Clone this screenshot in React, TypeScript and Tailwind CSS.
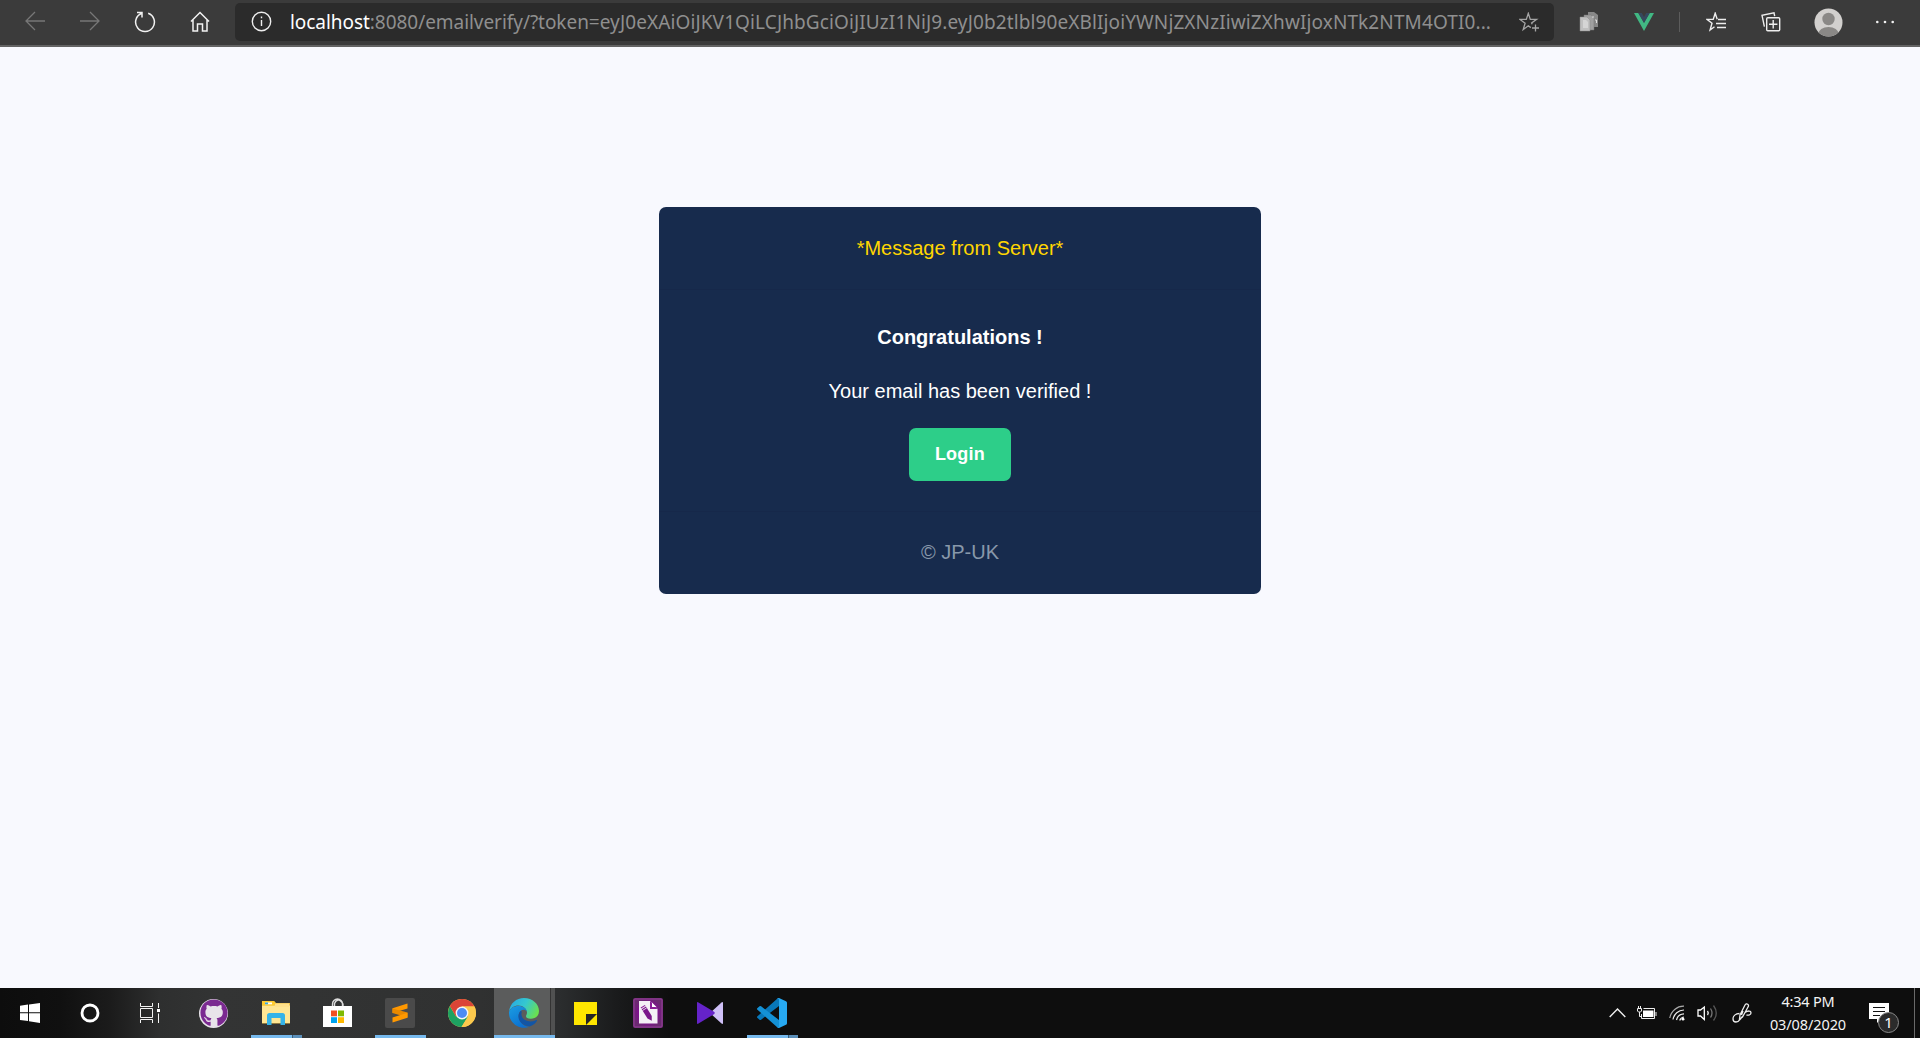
import type { ReactNode } from "react";
import { FaGithub } from "react-icons/fa";

function Slot({ className = "", children }: { className?: string; children?: ReactNode }) {
  return <div className={"relative flex h-full shrink-0 items-center justify-center " + className}>{children}</div>;
}

function BrowserBar() {
  return (
    <header className="flex h-[47px] w-full items-start border-b-2 border-[#636363] bg-[#3b3b3b] pl-[7.5px] font-['Noto_Sans','Open_Sans',sans-serif]">
      <Slot className="w-[55px] pb-[3px]">
        <svg width="20" height="20" viewBox="0 0 20 20" fill="none" stroke="#777" strokeWidth="1.3"><path d="M20 10H1M10 1L1 10l9 9" /></svg>
      </Slot>
      <Slot className="w-[55px] pb-[3px]">
        <svg width="20" height="20" viewBox="0 0 20 20" fill="none" stroke="#777" strokeWidth="1.3"><path d="M0 10h19M10 1l9 9-9 9" /></svg>
      </Slot>
      <Slot className="w-[55px] pb-[2px]">
        <svg width="22" height="22" viewBox="0 0 22 22" fill="none" stroke="#f2f2f2" strokeWidth="1.5"><path d="M14.2 2.3A9.4 9.4 0 1 1 7.3 2.5M3 1.5h5v5" /></svg>
      </Slot>
      <Slot className="w-[55px] pb-[3px]">
        <svg width="20" height="21" viewBox="0 0 20 21" fill="none" stroke="#f2f2f2" strokeWidth="1.5"><path d="M1 10.5L10 1.5l9 9M3 9v11h4.5v-7h5v7H17V9" /></svg>
      </Slot>
      <div className="ml-[7.5px] mt-[3px] flex h-[38px] w-[1319px] shrink-0 items-center rounded-[5px] bg-[#2b2b2b] pl-[16px] pr-[15px]">
        <svg className="mb-px shrink-0" width="21" height="21" viewBox="0 0 21 21" fill="none" stroke="#eee" strokeWidth="1.4"><circle cx="10.5" cy="10.5" r="9.2" /><path d="M10.5 9v6M10.5 5.6v1.7" /></svg>
        <div className="ml-[18px] w-[1204px] shrink-0 whitespace-nowrap text-[19px] leading-[38px] tracking-[0.11px] text-[#8f8f8f]">
          <span className="tracking-[-0.05px]"><span className="text-white">localhost</span>:8080/emailverify/?token=</span>eyJ0eXAiOiJKV1QiLCJhbGciOiJIUzI1NiJ9.eyJ0b2tlbl90eXBlIjoiYWNjZXNzIiwiZXhwIjoxNTk2NTM4OTI0...
        </div>
        <svg className="ml-auto shrink-0" width="20" height="20" viewBox="0 0 20 20" fill="none" stroke="#a5a5a5" strokeWidth="1.3"><path d="M13.2 12.3L12.6 11 17.6 7.4H11.3L9.3 1.3 7.3 7.4H1L6.1 11.2 4.2 17.6 9.3 13.8 11.8 15.6M16.5 12.5v7M13 16h7" /></svg>
      </div>
      <Slot className="ml-[7.5px] w-[55px] pb-px">
        <svg width="20" height="20" viewBox="0 0 20 20"><path d="M9 0h6l4 3v12H9z" fill="#888" /><path d="M5 3h7l3 3v12H5z" fill="#a0a0a0" stroke="#777" strokeWidth=".5" /><path d="M1 5h7l3 3v11H1z" fill="#c0c0c0" stroke="#888" strokeWidth=".5" /><path d="M4 8h3l2 2v6H4z" fill="#d5d5d5" /><path d="M13 5h2M16 8h1.5v3" stroke="#ddd" fill="none" /></svg>
      </Slot>
      <Slot className="w-[55px] pb-[2px]">
        <svg width="20" height="18" viewBox="0 0 20 18"><path d="M0 0h4.5L10 9.7 15.5 0H20L10 18z" fill="#41b883" /><path d="M4.2 0h3.6L10 4l2.2-4h3.6L10 10z" fill="#35495e" /></svg>
      </Slot>
      <div className="ml-[7.5px] mr-[8.5px] mt-[12px] h-[20px] w-px bg-[#5c5c5c]" />
      <Slot className="w-[55px] pb-[2px] pr-px">
        <svg width="20" height="20" viewBox="0 0 20 20" fill="none" stroke="#eee" strokeWidth="1.4"><path d="M11.2 7.3L9.2 1.2 7.2 7.4H.9L6 11.2 4.1 18 8.5 14.7M12 7.5h8M10 11.5h10M11 15.5h9" /></svg>
      </Slot>
      <Slot className="w-[55px] pb-px pr-px">
        <svg width="20" height="20" viewBox="0 0 20 20" fill="none" stroke="#eee" strokeWidth="1.4"><path d="M3.4 14.6L1 3.3 13 .8l.7 3.4" /><rect x="5.7" y="5.7" width="13" height="13" rx="1" /><path d="M12.2 8v8.4M8 12.2h8.4" /></svg>
      </Slot>
      <Slot className="w-[59px] pb-px">
        <svg width="29" height="29" viewBox="0 0 29 29"><clipPath id="avatar"><circle cx="14.5" cy="14.5" r="14" /></clipPath><g clipPath="url(#avatar)"><path d="M0 0h29v29H0z" fill="#d2d0ce" /><circle cx="14.5" cy="11" r="6.2" fill="#8a8886" /><ellipse cx="14.5" cy="26" rx="10.2" ry="7" fill="#8a8886" /></g></svg>
      </Slot>
      <Slot className="w-[55px] pb-[2px]">
        <svg width="20" height="4" viewBox="0 0 20 4" fill="#f2f2f2"><circle cx="2.3" cy="2" r="1.3" /><circle cx="10" cy="2" r="1.3" /><circle cx="17.7" cy="2" r="1.3" /></svg>
      </Slot>
    </header>
  );
}

function MessageCard() {
  return (
    <section className="mx-auto mt-[160px] flex h-[387px] w-[602px] flex-col rounded-[7px] bg-[#172b4d] text-center font-['Liberation_Sans',Arial,sans-serif] text-[20px] leading-[30px] text-white">
      <div className="h-[83px] border-b border-[#16284a] pt-[26px] text-[#ffd600]">*Message from Server*</div>
      <div className="flex h-[222px] flex-col items-center border-b border-[#16284a] pt-[32px]">
        <strong className="font-bold">Congratulations !</strong>
        <p className="mt-[24px]">Your email has been verified !</p>
        <button className="mt-[22px] h-[53px] w-[102px] rounded-[7px] bg-[#2dce89] pb-[2px] text-[18px] font-bold tracking-[0.25px]">Login</button>
      </div>
      <footer className="pt-[25px] text-[#8898aa]">© JP-UK</footer>
    </section>
  );
}

function Running({ split = false }: { split?: boolean }) {
  return (
    <div className="absolute bottom-0 left-[6px] flex h-[3px] w-[51px]">
      <div className="grow bg-[#76b9ed]" />
      {split && <div className="w-[10px] border-l border-[#3b5c76] bg-[#5b8fb9]" />}
    </div>
  );
}

function Taskbar() {
  return (
    <footer className="flex h-[50px] w-full bg-[linear-gradient(90deg,#0d0d0d_0px,#101010_60px,#1b1b1b_110px,#2e2f2f_160px,#333434_220px,#303131_480px,#2b2d2e_560px,#191a1b_620px,#0e0e0e_670px,#0e0e0e_100%)]">
      <Slot className="w-[60px]">
        <svg width="20" height="20" viewBox="0 0 20 20" fill="#fff"><path d="M0 2.8L8 1.6v7.6H0zM9 1.4L20 0v9.2H9zM0 10.2h8v7.9l-8-1.2zM9 10.2h11V20L9 18.3z" /></svg>
      </Slot>
      <Slot className="w-[60px]">
        <svg width="20" height="20" viewBox="0 0 20 20" fill="none" stroke="#fff" strokeWidth="2.8"><circle cx="10" cy="10" r="8" /></svg>
      </Slot>
      <Slot className="mr-[3px] w-[60px]">
        <svg width="21" height="20" viewBox="0 0 21 20" fill="none" stroke="#f4f4f4" strokeWidth="1"><path d="M.5 0v3.5h12V0M.5 20v-3.5h12V20M.5 5.5h12v9H.5zM18.5 0v5M18.5 10.5v9.5" /><path d="M17 6h3v3h-3z" fill="#fff" stroke="none" /></svg>
      </Slot>
      <Slot className="w-[62px] pr-px">
        <div className="flex h-[29px] w-[29px] items-center justify-center rounded-full bg-[#e8e4ea]"><FaGithub size={28} color="#7b2a91" /></div>
      </Slot>
      <Slot className="w-[62px]">
        <svg className="mb-px" width="28" height="24" viewBox="0 0 28 24"><path d="M0 0h12l2 2h14v20.5H0z" fill="#e9bd4a" /><path d="M0 4.500h28V22H0z" fill="#ffe694" /><path d="M13 2.500h14V6H13z" fill="#ffe08a" /><path d="M0 0h12l1.500 2L12 4.500H0z" fill="#ffcb2f" /><path d="M3 1.500h7v1.800H3z" fill="#fff" /><path d="M3 1.500h3v1.800H3z" fill="#37a8e0" /><path d="M5 24V14.500q0-2.500 2.500-2.500h13q2.500 0 2.500 2.500V24h-4.500v-7h-9v7z" fill="#35b3e8" /></svg>
        <Running split />
      </Slot>
      <Slot className="w-[62px] pr-px">
        <svg width="29" height="30" viewBox="0 0 29 30"><path d="M9.500 9V6a5 5 0 0 1 10 0v3M11.500 8V5.500q1-3 3.500-3.500t5 4V9" fill="none" stroke="#ddd" strokeWidth="1.4" /><path d="M0 8h29v21H0z" fill="#fff" /><path d="M8 12.500h6v5.800H8z" fill="#f25022" /><path d="M15 12.500h6v5.800h-6z" fill="#7fba00" /><path d="M8 19.200h6V25H8z" fill="#00a4ef" /><path d="M15 19.200h6V25h-6z" fill="#ffb900" /></svg>
      </Slot>
      <Slot className="w-[62px]">
        <div className="flex h-[30px] w-[30px] items-center justify-center rounded-[2px] bg-[#4a4a4a]">
          <svg width="16" height="20" viewBox="0 0 16 20"><path d="M.5 5.200L15.500.500v5L.500 10z" fill="#ff9800" /><path d="M.5 5.500v4.500l15 4.500V9.500z" fill="#e98900" /><path d="M.5 14.500L15.500 9.800v5L.500 19.500z" fill="#ff9800" /></svg>
        </div>
        <Running />
      </Slot>
      <Slot className="w-[62px]">
        <svg width="28" height="28" viewBox="0 0 28 28"><circle cx="14" cy="14" r="14" fill="#fcc94d" /><path d="M1.880 7A14 14 0 0 0 13.500 28L20 17.500 8 17.500z" fill="#1da261" /><path d="M14 7.500h12.400A14 14 0 0 0 1.880 7L8 17.500z" fill="#db4437" /><path d="M14 14l6 3.500L13.500 28A14 14 0 0 0 26.400 7.500H14z" fill="#fcc94d" /><circle cx="14" cy="14" r="6.400" fill="#f5f5f5" /><circle cx="14" cy="14" r="5" fill="#4c8bf5" /></svg>
      </Slot>
      <Slot className="w-[62px]">
        <div className="absolute inset-y-0 left-px right-0 flex flex-col">
          <div className="flex grow"><div className="w-[56px] bg-[#5b5c5c]" /><div className="w-[5px] border-l border-[#333] bg-[#505151]" /></div>
          <div className="h-[3px] bg-[#76b9ed]" />
        </div>
        <svg className="relative" width="30" height="30" viewBox="0 0 30 30">
          <defs>
            <linearGradient id="edgeTop" x1="0" y1=".2" x2="1" y2=".6"><stop stopColor="#27a9e5" /><stop offset=".5" stopColor="#35c8cf" /><stop offset="1" stopColor="#6be04e" /></linearGradient>
            <linearGradient id="edgeLeft" x1="0" y1="0" x2=".6" y2="1"><stop stopColor="#1b9de2" /><stop offset="1" stopColor="#0b6fd0" /></linearGradient>
          </defs>
          <path d="M0 14C1 5 7.500 0 15 0c8.500 0 15 6 15 13 0 5-3.700 7.700-8.200 7.700-3.200 0-4.800-1.200-4.800-2.500 0-1 1-1.500 1-3.700C18 11 14 7.500 9.500 7.500 5 7.500 1.500 10 0 14z" fill="url(#edgeTop)" />
          <path d="M0 14c1.500-4 5-6 9.500-6 4.800 0 8 2.500 8.400 5.500-1.400-2-4.400-2.500-6.400-.5-3 3-2 8.500 1 12 2 2.300 5 4 8 3.700A15 15 0 0 1 0 14z" fill="url(#edgeLeft)" />
          <path d="M11.500 13c-5 6-.5 14.500 9 15.500 3.500-1 6-3.300 7.300-5.500.5-.9-.2-1.200-1-.8-6 3-13.500.3-14.300-5.200-.2-1.500 0-2.500.5-3.500z" fill="#1255a5" />
        </svg>
      </Slot>
      <Slot className="w-[62px] pr-px">
        <svg width="23" height="23" viewBox="0 0 23 23"><path d="M0 0h23v23H0z" fill="#ffe600" /><path d="M12 12h11L12 23z" fill="#242424" /></svg>
      </Slot>
      <Slot className="w-[62px]">
        <svg width="30" height="30" viewBox="0 0 30 30">
          <defs><radialGradient id="editor"><stop stopColor="#a600b8" /><stop offset=".65" stopColor="#7d118c" /><stop offset="1" stopColor="#6b2a70" /></radialGradient></defs>
          <rect width="30" height="30" rx="2" fill="url(#editor)" /><rect x="1" y="1" width="28" height="28" rx="1" fill="none" stroke="#943f98" />
          <path d="M6 3h11l7.500 8v14.500H6z" fill="#f4eff5" /><path d="M17 3v8h7.500z" fill="#8b1b98" /><path d="M19 4.500V9h4.500z" fill="#fff" />
          <g transform="rotate(-32 14 15)"><path d="M11.500 9h5v11l-2.500 4-2.500-4z" fill="#7b168a" /><path d="M11.500 7h5v1h-5z" fill="#8b1b98" /><path d="M11.500 10.500h5" stroke="#fff" strokeWidth=".7" /></g>
        </svg>
      </Slot>
      <Slot className="w-[62px]">
        <svg width="26" height="22" viewBox="0 0 26 22"><path d="M26 1v20q0 1.500-1.500.5L13 11 24.500.500Q26-.500 26 1z" fill="#cfc0f7" /><path d="M0 1Q0-.500 1.500.500L17 9.800q1.500 1.200 0 2.400L1.500 21.500Q0 22.500 0 21z" fill="#6523c9" /></svg>
      </Slot>
      <Slot className="w-[62px]">
        <svg width="30" height="30" viewBox="0 0 30 30"><path d="M0 19.500l2.500 2.200q.8.500 1.600 0L22 8V0q-1 0-1.800.8L.200 18.500q-.500.500-.2 1z" fill="#0877b9" /><path d="M0 10.500l2.500-2.200q.8-.5 1.600 0L22 22v8q-1 0-1.800-.8L.200 11.500q-.5-.5-.2-1z" fill="#1491d6" /><path d="M22 0l7 3.200q1 .5 1 1.500v20.600q0 1-1 1.500L22 30q-1.300.3-2-.8 2 1 2-1.200V2q0-2.200-2-1.200.7-1.100 2-.8z" fill="#27a9f2" /></svg>
        <Running split />
      </Slot>

      <Slot className="ml-auto w-[30px]">
        <svg width="17" height="10" viewBox="0 0 17 10" fill="none" stroke="#eee" strokeWidth="1.4"><path d="M.7 9L8.500 1l7.800 8" /></svg>
      </Slot>
      <Slot className="w-[30px]">
        <svg width="20" height="14" viewBox="0 0 20 14" fill="none" stroke="#eee"><path d="M1.500 0v2M3.500 0v2" /><path d="M.5 2.500h4V5l-1 1h-2l-1-1zM2.500 6v4.500H4M6.500 2.500h11v10h-13V8M19 6v4" /><path d="M6 4.500h10.500v6.500H6z" fill="#fff" stroke="none" /></svg>
      </Slot>
      <Slot className="w-[30px]">
        <svg width="16" height="16" viewBox="0 0 16 16" fill="none" strokeWidth="1.2"><path d="M.8 13A14 14 0 0 1 15 1.200" stroke="#aaa" /><path d="M4 14.500A11 11 0 0 1 15 5M7.500 15A8 8 0 0 1 15 8.800M10.700 15.500A5 5 0 0 1 15 12" stroke="#eee" /><circle cx="14" cy="14.200" r="1.400" fill="#fff" /></svg>
      </Slot>
      <Slot className="w-[30px]">
        <svg width="21" height="18" viewBox="0 0 21 18" fill="none" strokeWidth="1.3"><path d="M1 6h2.500L7.300 3v12.500L3.500 12H1z" stroke="#fff" /><path d="M10.500 7q1.500 2 0 4" stroke="#eee" /><path d="M13.500 4.500q3 4.500 0 9" stroke="#777" /><path d="M16.500 1.500q5.500 7.500 0 15" stroke="#555" /></svg>
      </Slot>
      <Slot className="w-[40px]">
        <svg width="20" height="20" viewBox="0 0 20 20" fill="none" stroke="#eee" strokeWidth="1.3"><path d="M7.500 16l.5-4L13 2q1.200-1.800 2.700-.7T16 4l-5.500 10zM11 8l-1.500 4M7.500 10.500C3.500 10.500 1 13 1 16c0 2 1.500 3 3 3 3.500 0 4-3 6.500-5.500M13 9.500c3-2 6-2 6 .2 0 1.800-2 3-4.500 2.300" /></svg>
      </Slot>
      <div className="flex w-[92px] flex-col items-center pt-[2px] font-['Noto_Sans','Open_Sans',sans-serif] text-[14.5px] leading-[23px] text-[#f4f4f4]">
        <span className="tracking-[-0.2px]">4:34 PM</span>
        <span className="tracking-[-0.1px]">03/08/2020</span>
      </div>
      <Slot className="w-[50px]">
        <svg width="20" height="20" viewBox="0 0 20 20"><path d="M0 0h20v16h-8l-4 4v-4H0z" fill="#fff" /><path d="M4 4.500h12M4 8.500h12M4 12.500h7" stroke="#111" /></svg>
        <div className="absolute left-[24px] top-[24px] flex h-[21px] w-[21px] items-center justify-center rounded-full border border-[#8a8a8a] bg-[#2b2b2b] font-['Noto_Sans',sans-serif] text-[15px] text-white">1</div>
      </Slot>
      <div className="ml-[10px] mr-[5px] w-px bg-[#6a6a6a]" />
    </footer>
  );
}

export default function App() {
  return (
    <div className="flex h-[1038px] w-[1920px] flex-col overflow-hidden bg-[#f8f9fe]">
      <BrowserBar />
      <main className="min-h-0 grow">
        <MessageCard />
      </main>
      <Taskbar />
    </div>
  );
}
